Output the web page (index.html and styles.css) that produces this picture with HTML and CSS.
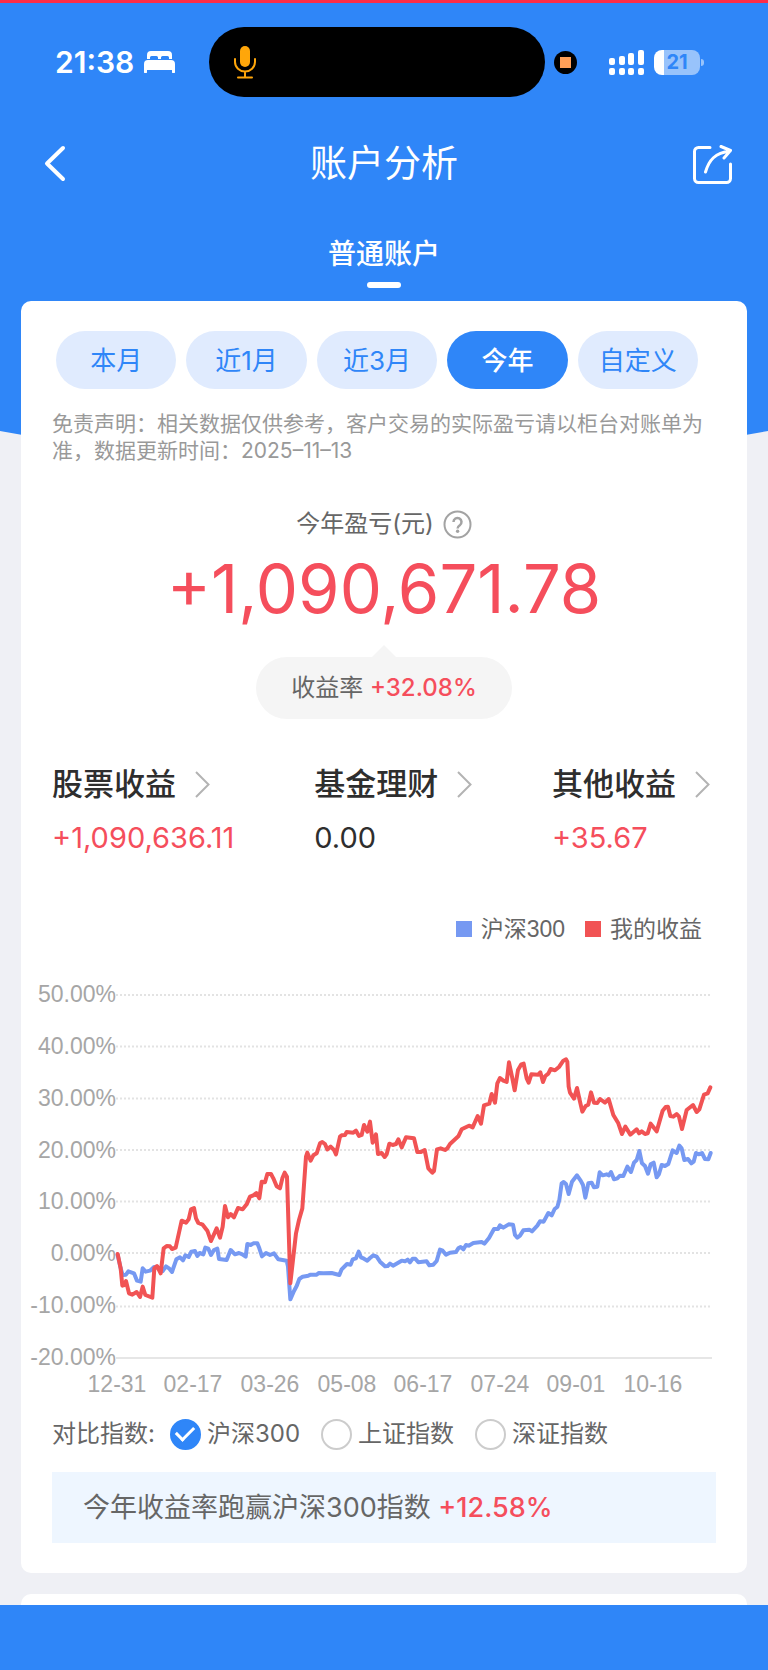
FILE: index.html
```html
<!DOCTYPE html>
<html lang="zh-CN">
<head>
<meta charset="utf-8">
<meta name="viewport" content="width=device-width, initial-scale=1">
<title>账户分析</title>
<link rel="stylesheet" href="styles.css">
</head>
<body>
<div class="page">
  <div class="backdrop"></div>

  <div class="status">
    <div class="status-left">
      <span class="time">21:38</span>
      <svg class="bed" width="31" height="22" viewBox="0 0 31 22" fill="#fff"><path d="M3 8V4a4 4 0 0 1 4-4h17a4 4 0 0 1 4 4v4h-3V6.500a1.500 1.500 0 0 0-1.500-1.500H18.500A1.500 1.500 0 0 0 17 6.500V8h-3V6.500a1.500 1.500 0 0 0-1.500-1.500H7.500A1.500 1.500 0 0 0 6 6.500V8z"/><path d="M0 13a4 4 0 0 1 4-4h23a4 4 0 0 1 4 4v8a1 1 0 0 1-3 0v-2H3v2a1 1 0 0 1-3 0z"/></svg>
    </div>
    <div class="island">
      <svg width="22" height="33" viewBox="0 0 22 33" fill="none" stroke="#ffa60a" stroke-width="2" stroke-linecap="round"><rect x="6" y="0" width="10" height="21" rx="5" fill="#ffa60a" stroke="none"/><path d="M1 13v3a10 9.500 0 0 0 20 0v-3M11 26v5M4 31.500h14"/></svg>
    </div>
    <svg class="record" width="23" height="23" viewBox="0 0 23 23"><circle cx="11.500" cy="11.500" r="11.500"/><path fill="#ff9f57" d="M6 6h11v11H6z"/></svg>
    <svg class="signal" width="35" height="25" viewBox="0 0 35 25" fill="#fff"><rect y="8" width="6" height="7" rx="2"/><rect x="10" y="6" width="6" height="9" rx="2"/><rect x="19" y="3" width="6" height="12" rx="2"/><rect x="29" width="6" height="15" rx="2"/><rect y="18" width="6" height="7" rx="2"/><rect x="10" y="18" width="6" height="7" rx="2"/><rect x="19" y="18" width="6" height="7" rx="2"/><rect x="29" y="18" width="6" height="7" rx="2"/></svg>
    <div class="battery"><span class="charge">21</span></div>
  </div>

  <header class="nav">
    <button class="icon-button" aria-label="返回"><svg width="24" height="38" viewBox="0 0 24 38" fill="none" stroke="#fff" stroke-width="4" stroke-linecap="round" stroke-linejoin="round"><path d="M20 3 4 18.500 20 34"/></svg></button>
    <h1>账户分析</h1>
    <button class="icon-button" aria-label="分享"><svg width="39" height="39" viewBox="0 0 39 39" fill="none" stroke="#fff" stroke-width="3" stroke-linecap="round" stroke-linejoin="round"><path d="M17 2.500H5.500a4 4 0 0 0-4 4v27a4 4 0 0 0 4 4h28a4 4 0 0 0 4-4V19M12.500 27C16 15 22 8 37 6M28 1.500 37.500 5.500 31 13"/></svg></button>
  </header>

  <nav class="tabs"><button class="tab">普通账户</button></nav>

  <main>
    <section class="card">
      <div class="ranges">
        <button class="range">本月</button>
        <button class="range">近1月</button>
        <button class="range">近3月</button>
        <button class="range active">今年</button>
        <button class="range">自定义</button>
      </div>
      <p class="notice">免责声明：相关数据仅供参考，客户交易的实际盈亏请以柜台对账单为准，数据更新时间：2025–11–13</p>

      <div class="summary">
        <div class="summary-label">今年盈亏(元)
          <svg width="29" height="29" viewBox="0 0 29 29" fill="none" stroke="#a3a3a3" stroke-width="2"><circle cx="14.500" cy="14.500" r="13"/><path stroke-width="2.500" d="M10.500 12a4 4 0 1 1 6.300 3.200c-1.500 1-2.200 1.500-2.200 3.300"/><circle cx="14.600" cy="21.300" r="1.700" fill="#a3a3a3" stroke="none"/></svg>
        </div>
        <div class="total">+1,090,671.78</div>
        <div class="rate">收益率 <span class="up medium">+32.08%</span></div>
      </div>

      <div class="sources">
        <a class="source" href="#stock"><span class="source-name">股票收益<svg width="15" height="27" viewBox="0 0 15 27" fill="none" stroke="#b3b3b3" stroke-width="2"><path d="M1 1 13.500 13.500 1 26"/></svg></span><span class="up">+1,090,636.11</span></a>
        <a class="source" href="#fund"><span class="source-name">基金理财<svg width="15" height="27" viewBox="0 0 15 27" fill="none" stroke="#b3b3b3" stroke-width="2"><path d="M1 1 13.500 13.500 1 26"/></svg></span><span>0.00</span></a>
        <a class="source" href="#other"><span class="source-name">其他收益<svg width="15" height="27" viewBox="0 0 15 27" fill="none" stroke="#b3b3b3" stroke-width="2"><path d="M1 1 13.500 13.500 1 26"/></svg></span><span class="up">+35.67</span></a>
      </div>

      <div class="legend">
        <span class="key"><i class="swatch blue"></i>沪深300</span>
        <span class="key"><i class="swatch red"></i>我的收益</span>
      </div>

      <svg class="chart" viewBox="0 0 726 440" role="img" aria-label="收益走势">
        <g class="grid">
          <path d="M95 25H690M95 76.500H690M95 128.500H690M95 180H690M95 231.500H690M95 283H690M95 336.500H690"/>
        </g>
        <path class="axis" d="M95 388H691"/>
        <g class="ticks end">
          <text x="95" y="32">50.00%</text><text x="95" y="84">40.00%</text><text x="95" y="136">30.00%</text><text x="95" y="188">20.00%</text><text x="95" y="239">10.00%</text><text x="95" y="291">0.00%</text><text x="95" y="343">-10.00%</text><text x="95" y="395">-20.00%</text>
        </g>
        <g class="ticks middle">
          <text x="96" y="422">12-31</text><text x="172" y="422">02-17</text><text x="249" y="422">03-26</text><text x="326" y="422">05-08</text><text x="402" y="422">06-17</text><text x="479" y="422">07-24</text><text x="555" y="422">09-01</text><text x="632" y="422">10-16</text>
        </g>
        <g class="series" transform="translate(-1 0) scale(.33333)">
          <polyline stroke="#7699f2" points="293,855 302,895 308,915 318,914 325,904 342,910 351,932 362,935 368,895 377,905 390,902 402,891 415,893 428,903 438,889 447,895 456,906 469,868 480,862 489,871 496,856 506,861 514,845 525,843 532,858 539,849 550,853 556,833 565,836 573,855 582,840 592,836 597,867 620,870 632,840 645,853 657,849 667,853 677,860 682,822 692,825 700,820 712,820 718,835 726,859 738,849 750,855 762,850 775,868 800,872 804,890 811,988 822,963 830,948 838,927 848,920 865,917 872,914 890,914 896,909 910,910 935,909 958,915 965,898 981,882 992,884 998,868 1008,865 1016,845 1023,862 1032,866 1042,872 1050,864 1060,856 1070,860 1080,875 1095,889 1103,888 1110,881 1119,887 1145,872 1155,874 1163,869 1170,877 1178,866 1186,866 1195,877 1220,874 1228,886 1240,884 1250,873 1260,839 1268,842 1278,854 1290,848 1308,846 1315,835 1322,831 1330,838 1338,825 1346,827 1360,819 1385,816 1393,821 1407,804 1422,777 1434,777 1440,766 1450,773 1466,763 1479,764 1485,795 1492,803 1500,797 1510,781 1528,779 1536,784 1552,767 1560,754 1571,755 1585,729 1595,736 1604,717 1612,711 1618,690 1625,640 1631,636 1638,642 1646,672 1656,635 1671,616 1682,632 1689,645 1696,683 1705,640 1715,638 1722,652 1732,650 1739,607 1748,616 1760,613 1767,616 1773,606 1782,628 1792,625 1800,617 1810,618 1822,590 1833,606 1842,578 1850,570 1858,543 1866,580 1875,588 1884,611 1892,583 1901,578 1910,622 1917,612 1925,585 1935,588 1945,582 1958,541 1970,549 1978,527 1985,535 1993,570 2004,567 2014,580 2021,575 2028,549 2036,553 2046,549 2055,567 2065,568 2072,549"/>
          <polyline stroke="#f15354" points="293,852 302,895 307,947 313,945 318,933 327,970 337,974 350,966 360,981 368,950 376,975 397,983 403,895 411,888 422,910 431,835 440,828 450,829 456,837 467,833 485,752 498,758 506,748 513,718 522,714 528,745 535,759 548,764 562,782 573,813 590,775 600,803 608,770 615,708 624,742 632,732 642,742 654,714 668,718 680,703 690,680 700,676 709,669 718,685 725,635 735,637 742,612 753,612 760,625 770,649 780,655 787,625 794,608 801,620 811,940 828,790 837,750 847,715 858,560 862,548 872,572 880,556 890,550 900,520 907,516 915,522 922,538 932,530 942,540 948,553 960,500 965,496 975,495 980,486 1000,488 1008,482 1017,498 1025,495 1032,465 1042,485 1050,455 1058,518 1068,493 1074,552 1085,549 1094,561 1100,553 1108,521 1118,525 1128,522 1135,508 1145,532 1158,502 1182,505 1192,546 1203,546 1214,540 1225,595 1237,608 1242,603 1251,538 1262,535 1275,540 1282,535 1290,522 1315,499 1325,478 1347,467 1358,472 1373,438 1383,461 1392,406 1408,401 1415,372 1425,398 1432,340 1440,324 1450,332 1460,336 1467,277 1476,320 1484,361 1494,300 1504,283 1511,281 1520,325 1526,338 1534,313 1555,314 1561,307 1569,336 1576,318 1585,311 1592,297 1605,301 1617,291 1630,272 1638,268 1642,275 1646,350 1650,368 1662,386 1671,354 1680,395 1687,425 1697,408 1705,404 1713,367 1722,398 1732,399 1740,387 1755,398 1766,387 1780,435 1795,460 1806,492 1816,470 1831,494 1850,478 1857,490 1865,484 1875,492 1883,490 1892,461 1910,484 1928,422 1937,411 1944,410 1951,438 1960,440 1970,432 1977,440 1986,477 2000,420 2019,405 2030,426 2038,418 2052,374 2063,370 2071,352"/>
        </g>
      </svg>

      <div class="compare">
        <span class="compare-label">对比指数:</span>
        <label class="option"><input type="radio" name="index" checked>沪深300</label>
        <label class="option"><input type="radio" name="index">上证指数</label>
        <label class="option"><input type="radio" name="index">深证指数</label>
      </div>

      <div class="result">今年收益率跑赢沪深300指数 <span class="up medium">+12.58%</span></div>
    </section>
    <section class="card next"></section>
  </main>
  <footer class="bottom"></footer>
</div>
</body>
</html>
```
FILE: styles.css
```css
* { box-sizing: border-box; }
body {
  margin: 0;
  background: #eff0f5;
  color: #333;
  font-family: Inter, "Noto Sans CJK SC", sans-serif;
}
button {
  border: 0;
  padding: 0;
  background: none;
  color: inherit;
  font: inherit;
}
svg { display: block; }
.page {
  position: relative;
  display: flex;
  flex-direction: column;
  min-height: 100vh;
  border-top: 3px solid #fe2c48;
}
.backdrop {
  position: absolute;
  inset: 0 0 auto;
  height: 466px;
  background: #2f86f8;
  clip-path: ellipse(131% 463px at 50% 0);
  z-index: -1;
}

.status {
  display: flex;
  align-items: center;
  height: 118px;
  padding: 0 64px 0 55px;
}
.status-left { display: flex; align-items: center; gap: 10px; }
.time { color: #fff; font-size: 30px; font-weight: 600; line-height: 36px; }
.island {
  flex: 1;
  display: flex;
  align-items: center;
  height: 70px;
  margin: 0 9px 0 34px;
  padding-left: 25px;
  border-radius: 35px;
  background: #000;
}
.record { margin-right: 32px; }
.signal { margin-right: 10px; }
.battery {
  position: relative;
  width: 46px;
  height: 25px;
  margin-right: 4px;
  border-radius: 8px;
  background: linear-gradient(90deg, #fff 10px, #98c3fb 10px);
  color: #2f86f8;
  font-size: 20px;
  font-weight: 700;
  line-height: 25px;
  text-align: center;
}
.battery::after {
  content: "";
  position: absolute;
  left: 47px;
  top: 9px;
  width: 3px;
  height: 7px;
  border-radius: 0 4px 4px 0;
  background: #98c3fb;
}

.nav {
  display: grid;
  grid-template-columns: 1fr auto 1fr;
  align-items: center;
  height: 86px;
  padding: 0 36px 0 43px;
  color: #fff;
}
.icon-button { display: flex; width: 39px; }
.icon-button:last-child { justify-self: end; }
h1 {
  margin: 0 7px 0 0;
  font-size: 37px;
  font-weight: 400;
  line-height: 48px;
}
.tabs { display: flex; justify-content: center; height: 94px; padding-top: 25px; }
.tab {
  position: relative;
  height: 56px;
  padding-bottom: 12px;
  color: #fff;
  font-size: 28px;
  font-weight: 500;
  line-height: 40px;
}
.tab::after {
  content: "";
  position: absolute;
  bottom: 0;
  left: 50%;
  width: 34px;
  height: 6px;
  margin-left: -17px;
  border-radius: 3px;
  background: #fff;
}

main { flex: 1; padding: 0 21px; }
.card {
  padding: 30px 0;
  border-radius: 10px;
  background: #fff;
}
.ranges {
  display: grid;
  grid-template-columns: repeat(5, 1fr);
  gap: 10px;
  padding: 0 49px 0 35px;
}
.range {
  height: 58px;
  padding-bottom: 4px;
  border-radius: 29px;
  background: #e0ebfe;
  color: #2f86f8;
  font-size: 26px;
}
.range.active { background: #2f86f8; color: #fff; font-weight: 500; }
.notice {
  margin: 21px 31px 0;
  color: #999;
  font-size: 21px;
  line-height: 27px;
}

.summary { display: flex; flex-direction: column; align-items: center; padding-top: 42px; }
.summary-label {
  display: flex;
  align-items: center;
  gap: 9px;
  color: #666;
  font-size: 24px;
  line-height: 36px;
}
.total { margin-top: 7px; color: #f54e5c; font-size: 67px; line-height: 80px; }
.up { color: #f54e5c; }
.medium { font-weight: 500; }
.rate {
  position: relative;
  height: 62px;
  margin-top: 28px;
  padding: 0 35px;
  border-radius: 31px;
  background: #f5f5f5;
  color: #666;
  font-size: 24px;
  line-height: 62px;
}
.rate::before {
  content: "";
  position: absolute;
  left: 50%;
  bottom: 100%;
  margin-left: -12px;
  border: 12px solid transparent;
  border-top: 0;
  border-bottom-color: #f5f5f5;
}

.sources {
  display: flex;
  justify-content: space-between;
  padding: 43px 37px 0 31px;
}
.source {
  display: flex;
  flex-direction: column;
  gap: 12px;
  color: #2e2e2e;
  font-size: 29px;
  line-height: 40px;
  text-decoration: none;
}
.source-name {
  display: flex;
  align-items: center;
  gap: 19px;
  font-size: 31px;
  font-weight: 500;
  line-height: 44px;
}

.legend {
  display: flex;
  justify-content: flex-end;
  gap: 20px;
  padding: 55px 45px 0 0;
  color: #666;
  font: 23px/32px "Liberation Sans", "Noto Sans CJK SC", sans-serif;
}
.key { display: flex; align-items: center; gap: 9px; }
.swatch { width: 16px; height: 16px; }
.blue { background: #7699f2; }
.red { background: #f15354; }

.chart { width: 100%; margin-top: 25px; }
.grid path { fill: none; stroke: #e3e3e3; stroke-width: 2; stroke-dasharray: 2 2; }
.axis { stroke: #e6e6e6; stroke-width: 2; }
.ticks { fill: #a6a6a6; font: 23px "Liberation Sans", sans-serif; }
.end { text-anchor: end; }
.middle { text-anchor: middle; }
.series { fill: none; stroke-width: 12; stroke-linejoin: round; stroke-linecap: round; }

.compare {
  display: flex;
  align-items: center;
  flex-wrap: wrap;
  gap: 21px;
  margin-top: 6px;
  padding: 0 31px;
  color: #666;
  font-size: 24px;
  line-height: 36px;
}
.compare-label { margin-right: -6px; }
.option { display: flex; align-items: center; gap: 6px; }
.option input {
  appearance: none;
  display: grid;
  place-items: center;
  width: 31px;
  height: 31px;
  margin: 0;
  border: 2px solid #ccc;
  border-radius: 50%;
}
.option input:checked { border-color: #2f86f8; background: #2f86f8; }
.option input:checked::before {
  content: "";
  width: 15px;
  height: 8px;
  margin-bottom: 5px;
  border: solid #fff;
  border-width: 0 0 3px 3px;
  transform: rotate(-45deg);
}
.result {
  margin: 20px 31px 0;
  padding: 0 31px;
  background: #eef6ff;
  color: #666;
  font-size: 27px;
  line-height: 71px;
}
.next { height: 11px; margin-top: 21px; padding: 0; border-radius: 10px 10px 0 0; }
.bottom { height: 65px; background: #2f86f8; }
```
